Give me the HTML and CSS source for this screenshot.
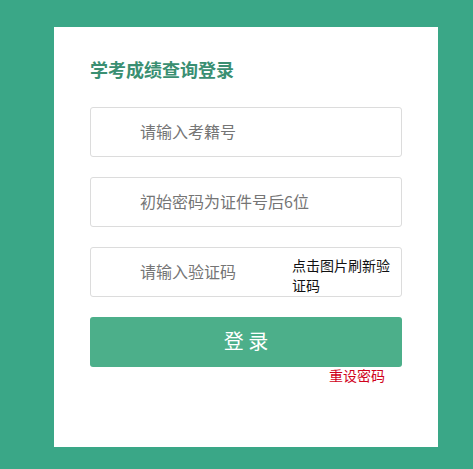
FILE: index.html
```html
<!DOCTYPE html>
<html lang="zh-CN">
<head>
    <meta charset="UTF-8">
    <meta name="viewport" content="width=device-width, initial-scale=1.0">
    <title>学考成绩查询登录</title>
    <link rel="stylesheet" href="styles.css">
</head>
<body>
    <div class="login-box">
        <h2 class="title">学考成绩查询登录</h2>
        <form class="login-form" onsubmit="return false;">
            <div class="field">
                <input type="text" placeholder="请输入考籍号">
            </div>
            <div class="field">
                <input type="password" placeholder="初始密码为证件号后6位">
            </div>
            <div class="field captcha">
                <input type="text" placeholder="请输入验证码">
                <span class="captcha-tip">点击图片刷新验证码</span>
            </div>
            <button class="btn-login">登 录</button>
            <div class="links">
                <a href="#" class="reset">重设密码</a>
            </div>
        </form>
    </div>
</body>
</html>
```

FILE: styles.css
```css
* {
    margin: 0;
    padding: 0;
    box-sizing: border-box;
    font-family: "Noto Sans CJK SC", "Noto Sans", sans-serif;
}

body {
    background: #3aa787;
    min-height: 100vh;
    padding-top: 27px;
}

.login-box {
    width: 384px;
    height: 420px;
    margin-left: 54px;
    background: #fff;
    padding: 30px 36px 0;
}

.title {
    font-size: 18px;
    line-height: 24px;
    font-weight: 700;
    color: #3a8f72;
    margin-bottom: 26px;
}

.field {
    position: relative;
    margin-bottom: 20px;
}

.field input {
    width: 100%;
    height: 50px;
    border: 1px solid #dcdcdc;
    border-radius: 3px;
    padding-left: 49px;
    padding-bottom: 2px;
    font-size: 16px;
    color: #333;
    outline: none;
}

.field input::placeholder {
    color: #757575;
}

.captcha-tip {
    position: absolute;
    left: 202px;
    top: 8px;
    width: 104px;
    font-size: 14px;
    line-height: 20px;
    color: #111;
    cursor: pointer;
}

.btn-login {
    width: 100%;
    height: 50px;
    border: none;
    border-radius: 3px;
    background: #4caf8a;
    color: #fff;
    font-size: 20px;
    padding-bottom: 4px;
    cursor: pointer;
}

.links {
    text-align: right;
    padding-right: 17px;
    margin-top: -1px;
    line-height: 16px;
}

.reset {
    font-size: 14px;
    color: #d0021b;
    text-decoration: none;
}
```
